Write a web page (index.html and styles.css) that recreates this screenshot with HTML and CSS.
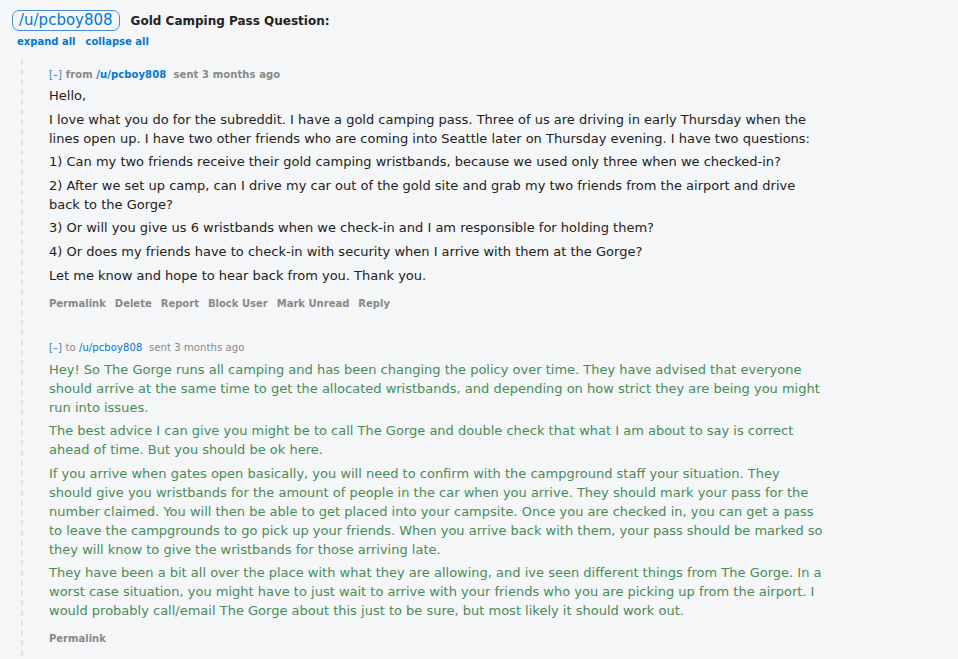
FILE: index.html
```html
<!DOCTYPE html>
<html>
<head>
<meta charset="utf-8">
<link rel="stylesheet" href="styles.css">
</head>
<body>
<div class="top">
  <div class="subject-row">
    <a class="user-box">/u/pcboy808</a>
    <span class="subject">Gold Camping Pass Question:</span>
  </div>
  <div class="expand-row">
    <a class="small-link">expand all</a>
    <a class="small-link">collapse all</a>
  </div>
</div>
<div class="thread">
  <div class="message">
    <div class="tagline bold">
      <span class="toggle">[–]</span> from <a class="author">/u/pcboy808</a>&nbsp;&nbsp;sent 3 months ago
    </div>
    <div class="md">
      <p>Hello,</p>
      <p>I love what you do for the subreddit. I have a gold camping pass. Three of us are driving in early Thursday when the<br>lines open up. I have two other friends who are coming into Seattle later on Thursday evening. I have two questions:</p>
      <p>1) Can my two friends receive their gold camping wristbands, because we used only three when we checked-in?</p>
      <p>2) After we set up camp, can I drive my car out of the gold site and grab my two friends from the airport and drive<br>back to the Gorge?</p>
      <p>3) Or will you give us 6 wristbands when we check-in and I am responsible for holding them?</p>
      <p>4) Or does my friends have to check-in with security when I arrive with them at the Gorge?</p>
      <p>Let me know and hope to hear back from you. Thank you.</p>
    </div>
    <ul class="buttons">
      <li>Permalink</li>
      <li>Delete</li>
      <li>Report</li>
      <li>Block User</li>
      <li>Mark Unread</li>
      <li>Reply</li>
    </ul>
  </div>
  <div class="message">
    <div class="tagline">
      <span class="toggle">[–]</span> to <a class="author">/u/pcboy808</a>&nbsp;&nbsp;sent 3 months ago
    </div>
    <div class="md sent">
      <p>Hey! So The Gorge runs all camping and has been changing the policy over time. They have advised that everyone<br>should arrive at the same time to get the allocated wristbands, and depending on how strict they are being you might<br>run into issues.</p>
      <p>The best advice I can give you might be to call The Gorge and double check that what I am about to say is correct<br>ahead of time. But you should be ok here.</p>
      <p>If you arrive when gates open basically, you will need to confirm with the campground staff your situation. They<br>should give you wristbands for the amount of people in the car when you arrive. They should mark your pass for the<br>number claimed. You will then be able to get placed into your campsite. Once you are checked in, you can get a pass<br>to leave the campgrounds to go pick up your friends. When you arrive back with them, your pass should be marked so<br>they will know to give the wristbands for those arriving late.</p>
      <p>They have been a bit all over the place with what they are allowing, and ive seen different things from The Gorge. In a<br>worst case situation, you might have to just wait to arrive with your friends who you are picking up from the airport. I<br>would probably call/email The Gorge about this just to be sure, but most likely it should work out.</p>
    </div>
    <ul class="buttons">
      <li>Permalink</li>
    </ul>
  </div>
</div>
</body>
</html>
```
FILE: styles.css
```css
html, body {
  margin: 0;
  padding: 0;
  background: #f5f6f8;
  font-family: "DejaVu Sans", Verdana, sans-serif;
  overflow: hidden;
}
.top {
  padding: 10px 0 0 12px;
}
.subject-row {
  display: flex;
  align-items: center;
  gap: 11px;
}
.user-box {
  display: inline-block;
  border: 1px solid #4a8bd0;
  border-radius: 7px;
  padding: 0 6px;
  height: 19px;
  line-height: 19px;
  font-size: 15px;
  color: #0079d3;
}
.subject {
  font-size: 12px;
  font-weight: bold;
  color: #222;
}
.expand-row {
  display: flex;
  gap: 10px;
  padding: 5px 0 0 5px;
}
.small-link {
  font-size: 10px;
  font-weight: bold;
  color: #0079d3;
}
.thread {
  margin: 12px 0 0 21px;
  border-left: 2px dashed #e2e4e7;
  padding-left: 26px;
  padding-top: 9px;
}
.message {
  padding-bottom: 32px;
}
.tagline {
  font-size: 10px;
  color: #888;
  line-height: 14px;
  letter-spacing: 0.1px;
}
.tagline.bold {
  font-weight: bold;
}
.toggle {
  color: #3a7cc0;
  font-weight: normal;
}
.author {
  color: #0079d3;
}
.md {
  font-size: 13px;
  line-height: 19px;
  color: #222;
  margin-top: 4px;
  white-space: nowrap;
}
.md.sent {
  margin-top: 5px;
  color: #4a8b57;
}
.md p {
  margin: 0 0 4.6px 0;
}
.buttons {
  list-style: none;
  margin: 13px 0 0 0;
  padding: 0;
  display: flex;
  gap: 9px;
  font-size: 10px;
  font-weight: bold;
  color: #888;
}
```
